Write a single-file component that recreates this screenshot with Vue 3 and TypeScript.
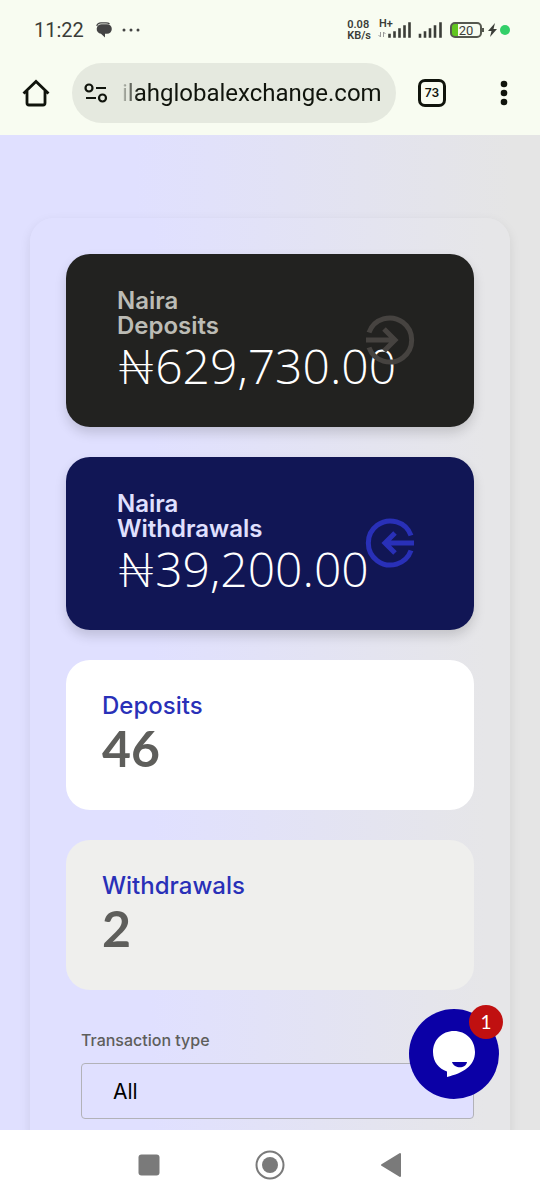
<script setup lang="ts">
import { ref } from 'vue'

interface Balance {
  tone: 'dark' | 'navy'
  currency: string
  kind: string
  amount: string
}

interface Count {
  tone: 'white' | 'grey'
  label: string
  value: number
}

const balances: Balance[] = [
  { tone: 'dark', currency: 'Naira', kind: 'Deposits', amount: '₦629,730.00' },
  { tone: 'navy', currency: 'Naira', kind: 'Withdrawals', amount: '₦39,200.00' },
]

const counts: Count[] = [
  { tone: 'white', label: 'Deposits', value: 46 },
  { tone: 'grey', label: 'Withdrawals', value: 2 },
]

const transactionType = ref('All')
</script>

<template>
  <div class="phone">
    <header class="chrome">
      <div class="status">
        <span class="clock">11:22</span>
        <svg class="bubble" width="16" height="16" viewBox="0 0 16 16" aria-hidden="true">
          <path d="M.8 4Q1.500 .8 5 .8h5Q12.500 .8 13.500 2" fill="none" stroke="#444" stroke-width="1.200" />
          <path d="M6 2.200h5a4.800 4.800 0 0 1 0 9.600H9V15.500L5 11.800A4.800 4.800 0 0 1 6 2.200z" fill="#444" />
        </svg>
        <svg width="18" height="4" viewBox="0 0 18 4" fill="#444" aria-hidden="true">
          <circle cx="2" cy="2" r="1.500" /><circle cx="9" cy="2" r="1.500" /><circle cx="16" cy="2" r="1.500" />
        </svg>
        <span class="speed"><span>0.08</span><span>KB/s</span></span>
        <div class="mobile">
          <span class="network">H+</span>
          <svg width="34" height="18" viewBox="0 0 34 18" aria-hidden="true">
            <path d="M2.500 11v5M.5 14l2 2M5.500 16v-5M7.500 13l-2-2" stroke="#999" fill="none" />
            <path d="M11.500 14v1.500M16.500 11.500v4M21.500 8.500v7M26.500 5.500v10M31.500 2.500v13" stroke="#3b3d38" stroke-width="2.600" stroke-linecap="square" />
          </svg>
        </div>
        <svg class="signal" width="25" height="18" viewBox="0 0 25 18" aria-hidden="true">
          <path d="M2 14v1.500M7 11.500v4M12 8.500v7M17 5.500v10M22.500 2.500v13" stroke="#3b3d38" stroke-width="2.600" stroke-linecap="square" />
        </svg>
        <div class="battery"><span>20</span></div>
        <svg class="bolt" width="11" height="16" viewBox="0 0 11 16" aria-hidden="true">
          <path d="M8 1L1 9h3.500L3 15l7-8H6.500z" fill="#3b3d38" />
        </svg>
        <span class="dot"></span>
      </div>

      <div class="toolbar">
        <button class="icon-button" type="button" aria-label="Home">
          <svg width="28" height="28" viewBox="0 0 28 28" fill="none" stroke="#10140c" stroke-width="2.800">
            <path d="M1.500 14.500L14 2.500l12.500 12M5 12v12q0 2 2 2h14q2 0 2-2V12" />
          </svg>
        </button>
        <a class="address" href="#">
          <svg width="24" height="20" viewBox="0 0 24 20" fill="none" stroke="#10140c" stroke-width="2.200" aria-hidden="true">
            <circle cx="5" cy="5" r="3.500" /><path d="M12 5h10M2 15h10" /><circle cx="18.500" cy="15" r="3.500" />
          </svg>
          <span class="url">ilahglobalexchange.com</span>
        </a>
        <button class="tabs" type="button" aria-label="Open tabs">73</button>
        <button class="icon-button menu" type="button" aria-label="Menu">
          <svg width="8" height="26" viewBox="0 0 8 26" fill="#10140c">
            <circle cx="4" cy="4" r="3.300" /><circle cx="4" cy="13" r="3.300" /><circle cx="4" cy="22" r="3.300" />
          </svg>
        </button>
      </div>
    </header>

    <div class="viewport">
      <main class="page">
        <section class="panel">
          <article v-for="b in balances" :key="b.kind" class="card balance" :class="b.tone">
            <h2>{{ b.currency }}<br />{{ b.kind }}</h2>
            <p class="amount">{{ b.amount }}</p>
            <svg class="arrow" width="50" height="50" viewBox="0 0 50 50" fill="none" stroke="currentColor" stroke-width="5" aria-hidden="true">
              <path v-if="b.tone === 'dark'" d="M4 17.500a22 22 0 1 1 0 15M1 25h28M19 14l11 11-11 11" />
              <path v-else d="M46 17.500a22 22 0 1 0 0 15M49 25H21M30 15l-10 10 10 10" />
            </svg>
          </article>

          <article v-for="c in counts" :key="c.label" class="card count" :class="c.tone">
            <h2>{{ c.label }}</h2>
            <p class="total">{{ c.value }}</p>
          </article>

          <form class="filter" @submit.prevent>
            <label for="transaction-type">Transaction type</label>
            <select id="transaction-type" v-model="transactionType">
              <option>All</option>
              <option>Deposits</option>
              <option>Withdrawals</option>
            </select>
          </form>
        </section>
      </main>

      <button class="chat" type="button" aria-label="Open chat, 1 new message">
        <svg width="44" height="48" viewBox="0 0 44 48" aria-hidden="true">
          <path d="M22 1C10 1 1 10 1 22c0 10 6 17 14 19.500V47C31 43 43 36 43 22 43 10 34 1 22 1z" fill="#fff" />
          <path d="M20 32h15c-1 7-13 7-15 0z" fill="#0b00a6" />
        </svg>
        <span class="badge">1</span>
      </button>
    </div>

    <nav class="system">
      <button type="button" aria-label="Recent apps">
        <svg width="22" height="22" viewBox="0 0 22 22"><rect width="21" height="21" x=".5" y=".5" rx="3" fill="#7a7a7a" /></svg>
      </button>
      <button type="button" aria-label="Home screen">
        <svg width="30" height="30" viewBox="0 0 30 30"><circle cx="15" cy="15" r="13.500" fill="none" stroke="#7a7a7a" stroke-width="2" /><circle cx="15" cy="15" r="8" fill="#7a7a7a" /></svg>
      </button>
      <button type="button" aria-label="Back">
        <svg width="22" height="26" viewBox="0 0 22 26"><path d="M2 13L20 2v22z" fill="#7a7a7a" stroke="#7a7a7a" stroke-width="2" stroke-linejoin="round" /></svg>
      </button>
    </nav>
  </div>
</template>

<style>
body {
  margin: 0;
}
</style>

<style scoped>
.phone {
  box-sizing: border-box;
  height: 100vh;
  display: flex;
  flex-direction: column;
  font-family: Inter, "Liberation Sans", sans-serif;
}
.phone *,
.phone *::before {
  box-sizing: border-box;
}
button {
  padding: 0;
  border: 0;
  background: none;
  font: inherit;
  color: inherit;
}
svg {
  display: block;
  flex: none;
}
h2,
p {
  margin: 0;
}
.chrome {
  background: #f8fcf1;
  color: #10140c;
}
.status {
  height: 60px;
  padding: 0 30px 0 34px;
  display: flex;
  align-items: center;
  color: #3b3d38;
  font-family: Roboto, sans-serif;
}
.clock {
  width: 62px;
  font-size: 20px;
}
.bubble {
  margin-right: 10px;
}
.speed {
  margin-left: auto;
  margin-right: 7px;
  display: flex;
  flex-direction: column;
  font-size: 11px;
  line-height: 11px;
  font-weight: 600;
}
.mobile {
  position: relative;
  margin-right: 6px;
}
.network {
  position: absolute;
  left: 1px;
  top: -3px;
  font-size: 11px;
  line-height: 11px;
  font-weight: 600;
}
.signal {
  margin-right: 7px;
}
.battery {
  position: relative;
  width: 32px;
  height: 16px;
  margin-right: 5px;
  border: 2px solid #55584f;
  border-radius: 5px;
  background: linear-gradient(90deg, #61c51f 6px, transparent 6px);
  font-size: 13px;
  line-height: 13px;
  text-align: center;
}
.battery::before {
  content: "";
  position: absolute;
  right: -4px;
  top: 4px;
  width: 2px;
  height: 4px;
  background: #55584f;
}
.bolt {
  margin-right: 2px;
}
.dot {
  width: 10px;
  height: 10px;
  border-radius: 50%;
  background: #32cf68;
}
.toolbar {
  height: 75px;
  padding: 3px 32px 12px 22px;
  display: flex;
  align-items: center;
}
.icon-button {
  display: flex;
}
.address {
  flex: 1;
  min-width: 0;
  height: 60px;
  margin: 0 22px;
  padding: 0 8px 0 12px;
  display: flex;
  align-items: center;
  gap: 14px;
  border-radius: 30px;
  background: #e5e9df;
  color: inherit;
  text-decoration: none;
}
.url {
  flex: 1;
  min-width: 0;
  overflow: hidden;
  font-family: Roboto, sans-serif;
  font-size: 24px;
  line-height: 32px;
  white-space: nowrap;
  background: linear-gradient(90deg, #c4c8be 0, #10140c 16px);
  background-clip: text;
  color: transparent;
}
.tabs {
  width: 28px;
  height: 28px;
  border: 3px solid #10140c;
  border-radius: 7px;
  font-size: 12px;
  line-height: 20px;
  font-weight: 600;
}
.menu {
  margin-left: 54px;
}
.viewport {
  position: relative;
  flex: 1;
  min-height: 0;
  background: linear-gradient(90deg, #e0e0ff 25%, #e5e5e5 95%);
}
.page {
  height: 100%;
  padding: 83px 30px 0;
  overflow-y: auto;
  scrollbar-width: none;
}
.panel {
  padding: 36px;
  display: flex;
  flex-direction: column;
  gap: 30px;
  border-radius: 24px;
  box-shadow: 0 4px 12px rgba(0, 0, 0, 0.09);
  background: linear-gradient(90deg, #e0e0ff 25%, #e6e6e8 95%);
}
.card {
  position: relative;
  border-radius: 24px;
}
.card h2 {
  font-size: 24px;
  line-height: 25px;
  font-weight: 600;
}
.balance {
  padding: 34px 51px 33px;
  box-shadow: 0 6px 12px rgba(0, 0, 0, 0.15);
}
.amount {
  font-family: "Open Sans", Lato, sans-serif;
  font-size: 48px;
  line-height: 56px;
  font-weight: 300;
  white-space: nowrap;
  color: #fff;
}
.arrow {
  position: absolute;
  right: 59px;
  top: 50%;
  margin-top: -26px;
}
.dark {
  background: #222220;
  color: #464340;
}
.dark h2 {
  color: #bcbcb5;
}
.navy {
  background: #111655;
  color: #2930b8;
}
.navy h2 {
  color: #e0e0ff;
}
.count {
  padding: 33px 36px 32px;
}
.card.count h2 {
  color: #2930b8;
  font-weight: 500;
}
.total {
  color: #5e5e5b;
  font-family: Lato, sans-serif;
  font-size: 50px;
  line-height: 60px;
  font-weight: 700;
}
.white {
  background: #fff;
}
.grey {
  background: #efefed;
}
.filter {
  margin: 8px 0 0 15px;
  display: flex;
  flex-direction: column;
  gap: 11px;
}
.filter label {
  color: #5e5e5b;
  font-size: 16px;
  line-height: 24px;
  font-weight: 500;
}
.filter select {
  appearance: none;
  height: 56px;
  padding: 0 31px;
  border: 1px solid #b2b2b8;
  border-radius: 4px;
  background: #e0e0ff;
  color: #000;
  font-family: inherit;
  font-size: 21px;
}
.chat {
  position: absolute;
  right: 41px;
  bottom: 31px;
  width: 90px;
  height: 90px;
  display: flex;
  align-items: center;
  justify-content: center;
  border-radius: 50%;
  background: #0b00a6;
}
.badge {
  position: absolute;
  right: -4px;
  top: -4px;
  width: 34px;
  border-radius: 50%;
  background: #c01010;
  color: #fff;
  font-family: Lato, sans-serif;
  font-size: 19px;
  line-height: 34px;
}
.system {
  height: 70px;
  padding: 0 88px;
  display: grid;
  grid-template-columns: repeat(3, 1fr);
  background: #fff;
}
.system button {
  display: flex;
  align-items: center;
  justify-content: center;
}
</style>
